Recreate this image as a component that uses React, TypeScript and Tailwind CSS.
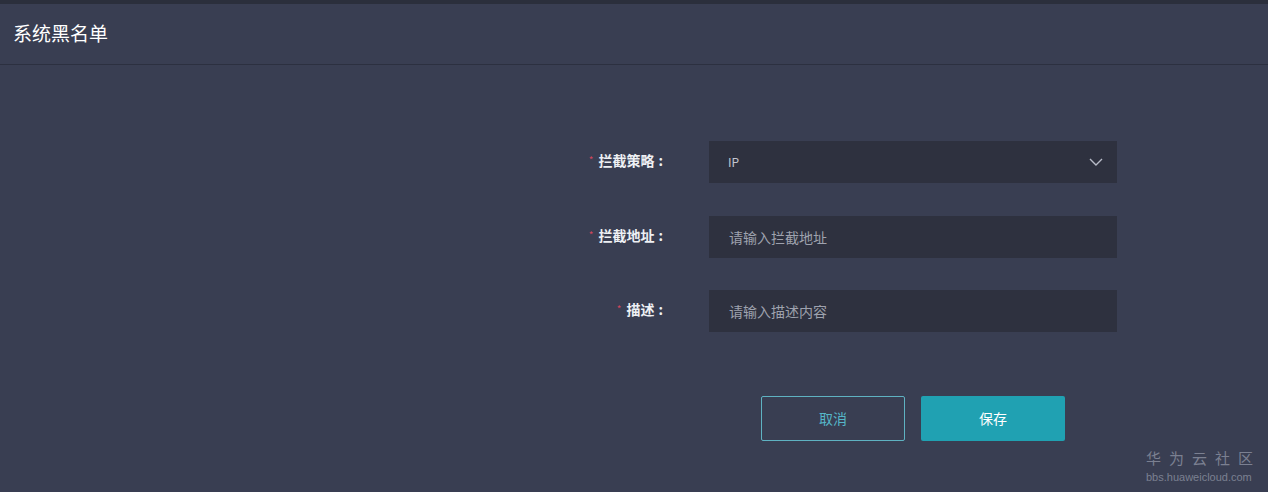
import React from 'react';

const font = { fontFamily: '"Noto Sans CJK SC", "Liberation Sans", sans-serif' };

const Label: React.FC<{ text: string }> = ({ text }) => (
  <div className="w-[140px] pt-[8px] flex justify-end items-start">
    <span className="text-[#d0465c] text-[10px] leading-[22px] mr-[5px]">*</span>
    <span className="text-[14px] leading-[22px] font-bold text-[#eef0f4]">{text}</span>
    <span className="text-[14px] leading-[22px] font-bold text-[#eef0f4] ml-[4px] mr-[2px]">:</span>
  </div>
);

const App: React.FC = () => {
  return (
    <div className="w-[1268px] h-[492px] bg-[#393e52] relative overflow-hidden" style={font}>
      <div className="h-[4px] bg-[#2b2f3c]" />
      <div className="h-[61px] border-b border-[#2c3040] flex items-center pl-[13px]">
        <h1 className="text-[19px] text-white leading-none pb-[3px]">系统黑名单</h1>
      </div>

      <div className="pl-[525px] pt-[76px] flex flex-col">
        <div className="flex">
          <Label text="拦截策略" />
          <div className="ml-[44px] w-[408px] h-[42px] bg-[#2e313f] flex items-center justify-between pl-[19px] pr-[14px]">
            <span className="text-[12px] text-[#c2c5cf]">IP</span>
            <svg width="14" height="9" viewBox="0 0 14 9" fill="none">
              <path d="M1 1l6 6 6-6" stroke="#b8bcc8" strokeWidth="1.4" />
            </svg>
          </div>
        </div>

        <div className="flex mt-[33px]">
          <Label text="拦截地址" />
          <div className="ml-[44px] w-[408px] h-[42px] bg-[#2e313f] flex items-center pl-[20px]">
            <span className="text-[14px] text-[#9ea2ae]">请输入拦截地址</span>
          </div>
        </div>

        <div className="flex mt-[32px]">
          <Label text="描述" />
          <div className="ml-[44px] w-[408px] h-[42px] bg-[#2e313f] flex items-center pl-[20px]">
            <span className="text-[14px] text-[#9ea2ae]">请输入描述内容</span>
          </div>
        </div>

        <div className="flex ml-[236px] mt-[64px] gap-[16px]">
          <button className="w-[144px] h-[45px] border border-[#5fb2c2] rounded-[2px] text-[14px] text-[#55b6c8]">
            取消
          </button>
          <button className="w-[144px] h-[45px] bg-[#20a1b2] rounded-[2px] text-[14px] text-white">
            保存
          </button>
        </div>
      </div>

      <div className="absolute left-[1146px] bottom-[9px] flex flex-col items-start text-[#7b8091]">
        <span className="text-[15px] leading-[18px] tracking-[8px]">华为云社区</span>
        <span className="text-[11px] leading-[12px] mt-[4px]" style={{ fontFamily: '"Liberation Sans", sans-serif' }}>
          bbs.huaweicloud.com
        </span>
      </div>
    </div>
  );
};

export default App;
